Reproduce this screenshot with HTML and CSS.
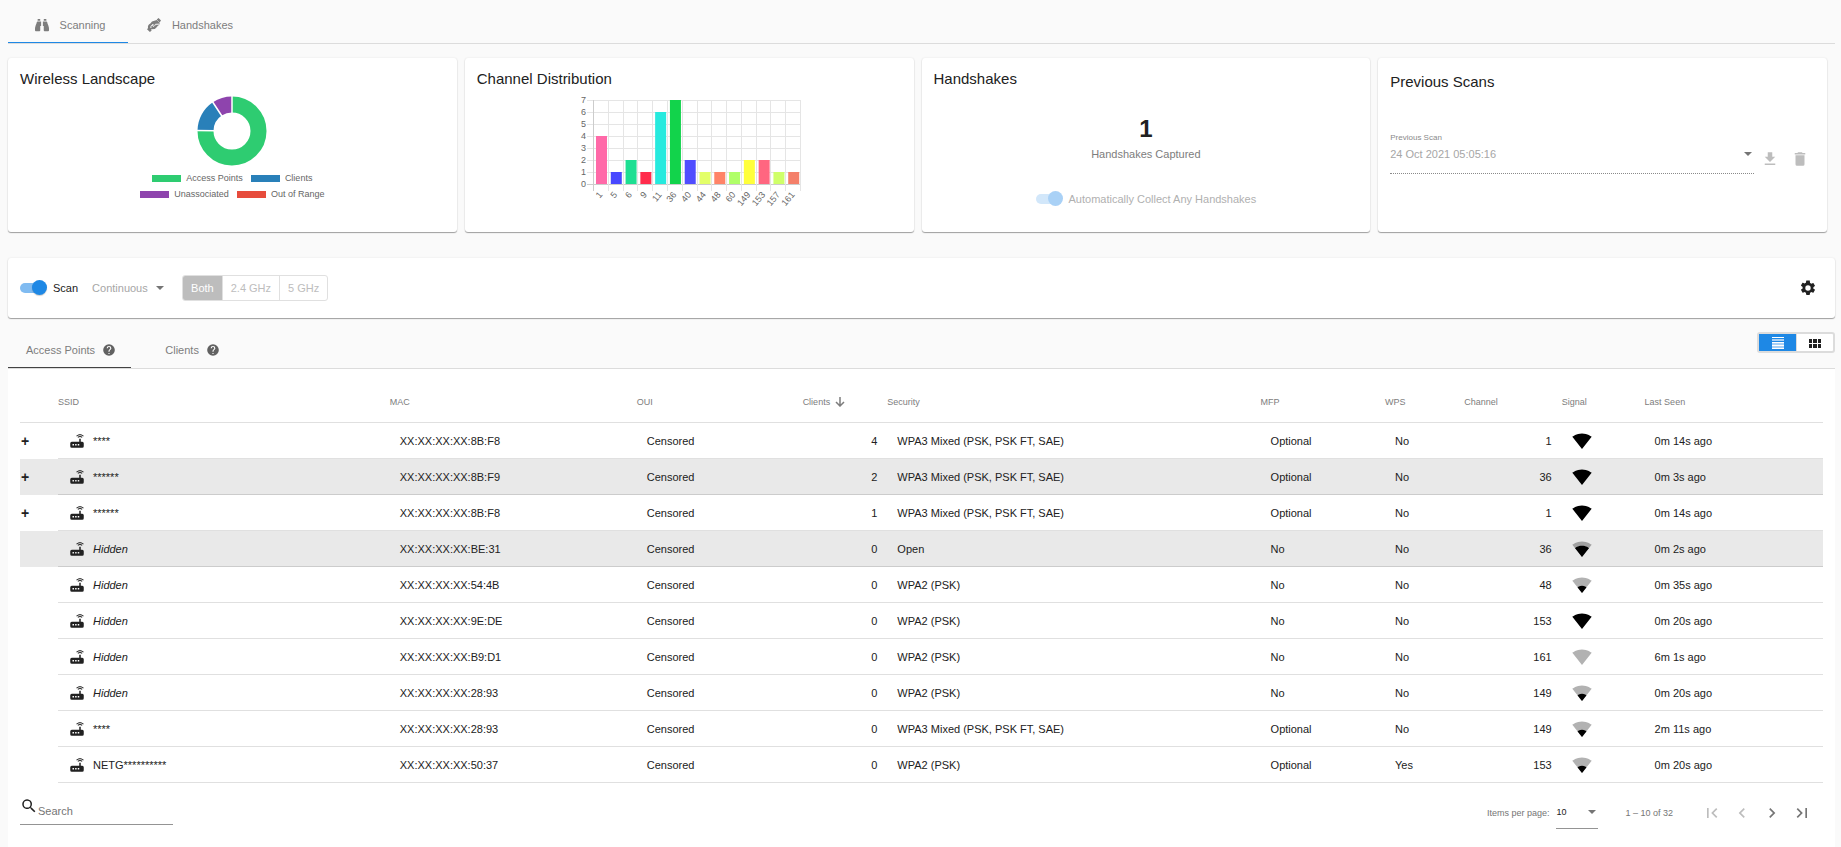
FILE: index.html
```html
<!DOCTYPE html>
<html lang="en">
<head>
    <meta charset="utf-8">
    <title>Recon</title>
    <link rel="stylesheet" href="styles.css">
</head>
<body>
    <svg class="sprite" aria-hidden="true">
        <symbol id="router" viewBox="0 0 24 24">
            <path d="M20.200 5.900l.8-.8C19.600 3.700 17.800 3 16 3s-3.600.7-5 2.100l.8.8C13 4.800 14.500 4.200 16 4.200s3 .6 4.200 1.700zM19.300 6.700C18.400 5.800 17.200 5.300 16 5.300s-2.400.5-3.300 1.400l.8.8c.7-.7 1.600-1 2.500-1s1.800.3 2.500 1zM19 13h-2V9h-2v4H5a2 2 0 0 0-2 2v4a2 2 0 0 0 2 2h14a2 2 0 0 0 2-2v-4a2 2 0 0 0-2-2zM8 18H6v-2h2zm3.500 0h-2v-2h2zm3.500 0h-2v-2h2z"/>
        </symbol>
        <symbol id="wifi-0" viewBox="0 0 24 24">
            <path fill-opacity=".3" d="M12 21.500 23.600 7C23.200 6.700 18.700 3 12 3S.8 6.700.4 7z"/>
        </symbol>
        <symbol id="wifi-1" viewBox="0 0 24 24">
            <path fill-opacity=".3" d="M12 21.500 23.600 7C23.200 6.700 18.700 3 12 3S.8 6.700.4 7z"/>
            <path d="M6.700 14.900 12 21.500l5.300-6.600C17.100 14.700 15.100 13 12 13s-5.100 1.700-5.300 1.900z"/>
        </symbol>
        <symbol id="wifi-3" viewBox="0 0 24 24">
            <path fill-opacity=".3" d="M12 21.500 23.600 7C23.200 6.700 18.700 3 12 3S.8 6.700.4 7z"/>
            <path d="M3.500 10.900 12 21.500l8.500-10.600C20.100 10.600 16.900 8 12 8s-8.100 2.600-8.500 2.900z"/>
        </symbol>
        <symbol id="wifi-4" viewBox="0 0 24 24">
            <path d="M12 21.500 23.600 7C23.200 6.700 18.700 3 12 3S.8 6.700.4 7z"/>
        </symbol>
        <symbol id="help" viewBox="0 0 24 24">
            <path d="M12 2a10 10 0 1 0 0 20 10 10 0 0 0 0-20zm1 17h-2v-2h2zm2.070-7.750-.9.920C13.450 12.900 13 13.500 13 15h-2v-.5c0-1.100.45-2.100 1.170-2.830l1.240-1.260c.37-.36.59-.86.59-1.410a2 2 0 1 0-4 0H8a4 4 0 1 1 8 0c0 .88-.36 1.680-.93 2.250z"/>
        </symbol>
    </svg>

    <nav class="tabs">
        <a class="tab active" href="#scanning">
            <svg class="tab-icon" viewBox="0 0 512 512"><path d="M416 48a16 16 0 0 0-16-16h-64a16 16 0 0 0-16 16v48h96zM64 159c-1 45-27 61-53 159-7 26-11 53-11 80v50a32 32 0 0 0 32 32h128a32 32 0 0 0 32-32V288h32V128H96c-17 0-31 14-32 31zm437 159c-26-98-52-114-53-159-1-17-15-31-32-31H288v160h32v160a32 32 0 0 0 32 32h128a32 32 0 0 0 32-32v-50c0-27-4-54-11-80zM176 32h-64a16 16 0 0 0-16 16v48h96V48a16 16 0 0 0-16-16z"/></svg>
            Scanning
        </a>
        <a class="tab" href="#handshakes">
            <svg class="tab-icon" viewBox="0 0 14 14">
                <path d="M0 11.300 1.600 9.500 4.700 12.400 2.900 14zM9.700 1.600 11.600 0 14 2.400 12.600 4.500z"/>
                <path d="M1 10C.6 8 1.500 6.300 3.400 5.600L5 3.500 9.800 1.900l3 3c0 1.500-.6 2.100-1.700 2.500L9.200 9.700 7.800 11l-3.300.2-1 1.300z"/>
                <path d="M3.900 10c-.2-2 .4-3 2.300-3.500L5.700 8c.8.9 2 .2 2.700-1.700l4.400-.2" fill="none" stroke="#fafafa"/>
            </svg>
            Handshakes
        </a>
    </nav>

    <section class="cards">
        <div class="card">
            <h2>Wireless Landscape</h2>
            <div class="landscape">
                <svg class="donut" viewBox="-36 -36 72 72">
                    <g fill="none" stroke-width="16">
                        <path stroke="#2ecc71" d="M0-26.500A26.500 26.500 0 1 1-26.500-.4"/>
                        <path stroke="#2980b9" d="M-26.500-.4A26.500 26.500 0 0 1-14.700-22.100"/>
                        <path stroke="#8e44ad" d="M-14.700-22.100A26.500 26.500 0 0 1 0-26.500"/>
                    </g>
                    <path stroke="#fff" stroke-width="1.500" d="M0-17V-36M-17-.3-36-.6M-9.500-14-20-30"/>
                </svg>
                <ul class="legend">
                    <li><i class="swatch green"></i>Access Points</li>
                    <li><i class="swatch blue"></i>Clients</li>
                </ul>
                <ul class="legend">
                    <li><i class="swatch purple"></i>Unassociated</li>
                    <li><i class="swatch red"></i>Out of Range</li>
                </ul>
            </div>
        </div>

        <div class="card">
            <h2>Channel Distribution</h2>
            <svg class="bars" id="channels" viewBox="0 0 228 120"></svg>
        </div>

        <div class="card">
            <h2>Handshakes</h2>
            <div class="captured">
                <strong>1</strong>
                <span>Handshakes Captured</span>
                <label class="switch-label disabled">
                    <input type="checkbox" class="switch" checked disabled>
                    Automatically Collect Any Handshakes
                </label>
            </div>
        </div>

        <div class="card previous">
            <h2>Previous Scans</h2>
            <div class="previous-row">
                <div class="field">
                    <label for="previous-scan">Previous Scan</label>
                    <select id="previous-scan" class="select" disabled>
                        <option>24 Oct 2021 05:05:16</option>
                    </select>
                </div>
                <button class="icon-btn" aria-label="Download" disabled>
                    <svg viewBox="0 0 24 24"><path d="M19 9h-4V3H9v6H5l7 7 7-7zM5 18v2h14v-2H5z"/></svg>
                </button>
                <button class="icon-btn" aria-label="Delete" disabled>
                    <svg viewBox="0 0 24 24"><path d="M6 19a2 2 0 0 0 2 2h8a2 2 0 0 0 2-2V7H6v12zM19 4h-3.500l-1-1h-5l-1 1H5v2h14V4z"/></svg>
                </button>
            </div>
        </div>
    </section>

    <section class="toolbar">
        <label class="switch-label">
            <input type="checkbox" class="switch" checked>
            Scan
        </label>
        <select class="select scan-mode" aria-label="Scan mode" disabled>
            <option>Continuous</option>
        </select>
        <div class="bands">
            <button class="selected" disabled>Both</button>
            <button disabled>2.4 GHz</button>
            <button disabled>5 GHz</button>
        </div>
        <button class="icon-btn settings" aria-label="Settings">
            <svg viewBox="0 0 24 24"><path d="M19.140 12.940c.04-.3.06-.61.06-.94s-.02-.64-.07-.94l2.030-1.580a.49.490 0 0 0 .12-.61l-1.920-3.320a.49.490 0 0 0-.59-.22l-2.390.96a7 7 0 0 0-1.620-.94l-.36-2.540A.48.480 0 0 0 13.920 2h-3.840a.48.480 0 0 0-.48.410l-.36 2.540a7.400 7.400 0 0 0-1.620.94l-2.390-.96a.48.480 0 0 0-.59.220L2.720 8.470a.48.480 0 0 0 .12.610l2.030 1.580c-.05.3-.07.62-.07.94s.02.64.07.94l-2.030 1.580a.49.490 0 0 0-.12.610l1.920 3.320c.12.220.37.290.59.220l2.390-.96c.5.380 1.030.7 1.620.94l.36 2.540c.05.24.24.410.48.410h3.840c.24 0 .44-.17.470-.410l.36-2.540a7 7 0 0 0 1.620-.94l2.390.96c.22.080.47 0 .59-.22l1.920-3.320a.48.480 0 0 0-.12-.61zM12 15.600a3.600 3.600 0 1 1 0-7.200 3.600 3.600 0 0 1 0 7.200z" fill-rule="evenodd"/></svg>
        </button>
    </section>

    <div class="list-head">
        <nav class="tabs list-tabs">
            <a class="tab active" href="#access-points">Access Points <svg class="help"><use href="#help"/></svg></a>
            <a class="tab" href="#clients">Clients <svg class="help"><use href="#help"/></svg></a>
        </nav>
        <div class="view-toggle">
            <button class="selected" aria-label="Table view">
                <svg viewBox="0 0 12 12"><path fill="#fff" d="M0 0h12v1H0zM0 5h12v1H0zM0 8h12v1H0zM0 11h12v1H0z"/><path fill="#a9d1f6" d="M0 2h12v2H0zM0 6h12v2H0zM0 9h12v2H0z"/></svg>
            </button>
            <button aria-label="Grid view">
                <svg viewBox="0 0 12 12"><path fill="#212121" d="M0 2h3v4H0zM4 2h4v4H4zM9 2h3v4H9zM0 7h3v4H0zM4 7h4v4H4zM9 7h3v4H9z"/></svg>
            </button>
        </div>
    </div>

    <main class="panel">
        <table>
            <colgroup>
                <col class="c-expand"><col class="c-ssid"><col class="c-mac"><col class="c-oui"><col class="c-clients"><col class="c-security">
                <col class="c-mfp"><col class="c-wps"><col class="c-channel"><col class="c-signal"><col class="c-seen">
            </colgroup>
            <thead>
                <tr>
                    <th></th>
                    <th>SSID</th>
                    <th>MAC</th>
                    <th>OUI</th>
                    <th>Clients <svg class="sort" viewBox="0 0 10 10"><path d="M5 0v8.500M1 5l4 4 4-4" fill="none" stroke="currentColor" stroke-width="1.500"/></svg></th>
                    <th>Security</th>
                    <th>MFP</th>
                    <th>WPS</th>
                    <th>Channel</th>
                    <th>Signal</th>
                    <th>Last Seen</th>
                </tr>
            </thead>
            <tbody>
                <tr>
                    <td><button class="expand">+</button></td>
                    <td><svg class="router"><use href="#router"/></svg>****</td>
                    <td>XX:XX:XX:XX:8B:F8</td>
                    <td>Censored</td>
                    <td class="num">4</td>
                    <td>WPA3 Mixed (PSK, PSK FT, SAE)</td>
                    <td>Optional</td>
                    <td>No</td>
                    <td class="num">1</td>
                    <td><svg class="wifi"><use href="#wifi-4"/></svg></td>
                    <td>0m 14s ago</td>
                </tr>
                <tr class="shaded">
                    <td><button class="expand">+</button></td>
                    <td><svg class="router"><use href="#router"/></svg>******</td>
                    <td>XX:XX:XX:XX:8B:F9</td>
                    <td>Censored</td>
                    <td class="num">2</td>
                    <td>WPA3 Mixed (PSK, PSK FT, SAE)</td>
                    <td>Optional</td>
                    <td>No</td>
                    <td class="num">36</td>
                    <td><svg class="wifi"><use href="#wifi-4"/></svg></td>
                    <td>0m 3s ago</td>
                </tr>
                <tr>
                    <td><button class="expand">+</button></td>
                    <td><svg class="router"><use href="#router"/></svg>******</td>
                    <td>XX:XX:XX:XX:8B:F8</td>
                    <td>Censored</td>
                    <td class="num">1</td>
                    <td>WPA3 Mixed (PSK, PSK FT, SAE)</td>
                    <td>Optional</td>
                    <td>No</td>
                    <td class="num">1</td>
                    <td><svg class="wifi"><use href="#wifi-4"/></svg></td>
                    <td>0m 14s ago</td>
                </tr>
                <tr class="shaded">
                    <td></td>
                    <td><svg class="router"><use href="#router"/></svg><em>Hidden</em></td>
                    <td>XX:XX:XX:XX:BE:31</td>
                    <td>Censored</td>
                    <td class="num">0</td>
                    <td>Open</td>
                    <td>No</td>
                    <td>No</td>
                    <td class="num">36</td>
                    <td><svg class="wifi"><use href="#wifi-3"/></svg></td>
                    <td>0m 2s ago</td>
                </tr>
                <tr>
                    <td></td>
                    <td><svg class="router"><use href="#router"/></svg><em>Hidden</em></td>
                    <td>XX:XX:XX:XX:54:4B</td>
                    <td>Censored</td>
                    <td class="num">0</td>
                    <td>WPA2 (PSK)</td>
                    <td>No</td>
                    <td>No</td>
                    <td class="num">48</td>
                    <td><svg class="wifi"><use href="#wifi-1"/></svg></td>
                    <td>0m 35s ago</td>
                </tr>
                <tr>
                    <td></td>
                    <td><svg class="router"><use href="#router"/></svg><em>Hidden</em></td>
                    <td>XX:XX:XX:XX:9E:DE</td>
                    <td>Censored</td>
                    <td class="num">0</td>
                    <td>WPA2 (PSK)</td>
                    <td>No</td>
                    <td>No</td>
                    <td class="num">153</td>
                    <td><svg class="wifi"><use href="#wifi-4"/></svg></td>
                    <td>0m 20s ago</td>
                </tr>
                <tr>
                    <td></td>
                    <td><svg class="router"><use href="#router"/></svg><em>Hidden</em></td>
                    <td>XX:XX:XX:XX:B9:D1</td>
                    <td>Censored</td>
                    <td class="num">0</td>
                    <td>WPA2 (PSK)</td>
                    <td>No</td>
                    <td>No</td>
                    <td class="num">161</td>
                    <td><svg class="wifi"><use href="#wifi-0"/></svg></td>
                    <td>6m 1s ago</td>
                </tr>
                <tr>
                    <td></td>
                    <td><svg class="router"><use href="#router"/></svg><em>Hidden</em></td>
                    <td>XX:XX:XX:XX:28:93</td>
                    <td>Censored</td>
                    <td class="num">0</td>
                    <td>WPA2 (PSK)</td>
                    <td>No</td>
                    <td>No</td>
                    <td class="num">149</td>
                    <td><svg class="wifi"><use href="#wifi-1"/></svg></td>
                    <td>0m 20s ago</td>
                </tr>
                <tr>
                    <td></td>
                    <td><svg class="router"><use href="#router"/></svg>****</td>
                    <td>XX:XX:XX:XX:28:93</td>
                    <td>Censored</td>
                    <td class="num">0</td>
                    <td>WPA3 Mixed (PSK, PSK FT, SAE)</td>
                    <td>Optional</td>
                    <td>No</td>
                    <td class="num">149</td>
                    <td><svg class="wifi"><use href="#wifi-1"/></svg></td>
                    <td>2m 11s ago</td>
                </tr>
                <tr>
                    <td></td>
                    <td><svg class="router"><use href="#router"/></svg>NETG**********</td>
                    <td>XX:XX:XX:XX:50:37</td>
                    <td>Censored</td>
                    <td class="num">0</td>
                    <td>WPA2 (PSK)</td>
                    <td>Optional</td>
                    <td>Yes</td>
                    <td class="num">153</td>
                    <td><svg class="wifi"><use href="#wifi-1"/></svg></td>
                    <td>0m 20s ago</td>
                </tr>
            </tbody>
        </table>

        <footer class="panel-foot">
            <label class="search">
                <svg viewBox="0 0 24 24"><path d="M15.500 14h-.79l-.28-.27A6.500 6.500 0 1 0 13.730 14.430l.27.28v.79l5 4.990L20.490 19zm-6 0a4.500 4.500 0 1 1 0-9 4.500 4.500 0 0 1 0 9z"/></svg>
                <input type="text" placeholder="Search" aria-label="Search">
            </label>
            <div class="paginator">
                <label for="page-size">Items per page:</label>
                <select id="page-size" class="select">
                    <option>10</option>
                </select>
                <span class="range">1 – 10 of 32</span>
                <button class="page-btn" aria-label="First page" disabled><svg viewBox="0 0 24 24"><path d="M18.410 16.590 13.820 12l4.590-4.590L17 6l-6 6 6 6zM6 6h2v12H6z"/></svg></button>
                <button class="page-btn" aria-label="Previous page" disabled><svg viewBox="0 0 24 24"><path d="M15.410 7.410 14 6l-6 6 6 6 1.410-1.410L10.830 12z"/></svg></button>
                <button class="page-btn" aria-label="Next page"><svg viewBox="0 0 24 24"><path d="M10 6 8.590 7.410 13.170 12l-4.580 4.590L10 18l6-6z"/></svg></button>
                <button class="page-btn" aria-label="Last page"><svg viewBox="0 0 24 24"><path d="M5.590 7.410 10.180 12l-4.590 4.590L7 18l6-6-6-6zM16 6h2v12h-2z"/></svg></button>
            </div>
        </footer>
    </main>
    <script src="chart.js"></script>
</body>
</html>
```
FILE: chart.js
```js
const channels = [
    ['1', 4, '#ff69a8'],
    ['5', 1, '#4848ff'],
    ['6', 2, '#1ddf92'],
    ['9', 1, '#ff2c4c'],
    ['11', 6, '#26eade'],
    ['36', 7, '#12d34b'],
    ['40', 2, '#504dff'],
    ['44', 1, '#e3ff69'],
    ['48', 1, '#ff8468'],
    ['60', 1, '#b0ff69'],
    ['149', 2, '#ffff3b'],
    ['153', 2, '#ff6680'],
    ['157', 1, '#cfff69'],
    ['161', 1, '#f47f69']
];

const chart = document.querySelector('#channels');
const left = 19, right = 226, top0 = 6, step = 12, max = 7;
const bottom = top0 + step * max;
const slot = (right - left) / channels.length;

const add = (name, attrs, text) => {
    const el = document.createElementNS('http://www.w3.org/2000/svg', name);
    Object.keys(attrs).forEach((key) => el.setAttribute(key, attrs[key]));
    if(text) el.textContent = text;
    chart.appendChild(el);
}

const line = (x1, y1, x2, y2, cls) => add('line', {x1, y1, x2, y2, 'class': cls});

for(let i = 0; i <= max; i++){
    let y = top0 + step * i;
    line(left - 7, y + .5, right, y + .5, i === max ? 'axis' : 'grid');
    add('text', {x: left - 8, y: y + 3, 'text-anchor': 'end'}, String(max - i));
}
for(let i = 0; i <= channels.length; i++){
    let x = Math.round(left + slot * i) - .5;
    line(x, top0, x, bottom + 7, i === 0 ? 'axis' : 'grid');
}
channels.forEach(([name, count, color], i) => {
    let x = left + slot * i;
    add('rect', {x: x + 2, y: bottom - step * count, width: 11, height: step * count, fill: color});
    add('text', {'text-anchor': 'end', transform: `translate(${x + 9} ${bottom + 11}) rotate(-50)`}, name);
});
```
FILE: styles.css
```css
*{
    box-sizing: border-box;
}
body{
    margin: 0;
    padding: 6px 6px 0 8px;
    min-height: 100vh;
    display: flex;
    flex-direction: column;
    background-color: #fafafa;
    color: #212121;
    font-family: "Liberation Sans", Arial, sans-serif;
    font-size: 11px;
}
button, input, select{
    font: inherit;
    color: inherit;
}
button{
    padding: 0;
    border: 0;
    background: none;
}
svg{
    fill: currentColor;
}
.sprite{
    display: none;
}

/* tabs */
.tabs{
    display: flex;
    height: 38px;
    border-bottom: 1px solid #dcdcdc;
}
.tab{
    display: flex;
    align-items: center;
    justify-content: center;
    min-width: 120px;
    padding: 2px 0 0 4px;
    border-bottom: 1px solid transparent;
    color: #7d7d7d;
    text-decoration: none;
}
.tab.active{
    border-color: #1e88e5;
}
.tab-icon{
    width: 14px;
    height: 14px;
    margin-right: 11px;
}

/* cards */
.cards{
    display: grid;
    grid-template-columns: repeat(4, 1fr);
    margin-top: 14px;
}
.card, .toolbar{
    background-color: #fff;
    border-radius: 3px;
    box-shadow: 0 1px 1px rgba(0, 0, 0, .35), 0 0 2px rgba(0, 0, 0, .1);
}
.card{
    min-height: 174px;
    margin-right: 8px;
    padding: 12px;
}
h2{
    margin: 0;
    font-size: 15px;
    font-weight: normal;
    line-height: 18px;
}
.landscape, .captured{
    display: flex;
    flex-direction: column;
    align-items: center;
}
.donut{
    width: 72px;
    height: 72px;
    margin: 7px 0 3px;
}
.legend{
    display: flex;
    gap: 8px;
    margin: 0;
    padding: 0;
    list-style: none;
    font-size: 9px;
    line-height: 16px;
    color: #666;
}
.legend li{
    display: flex;
    align-items: center;
    gap: 5px;
}
.swatch{
    width: 29px;
    height: 7px;
}
.green{ background-color: #2ecc71; }
.blue{ background-color: #2980b9; }
.purple{ background-color: #8e44ad; }
.red{ background-color: #e74c3c; }

.bars{
    display: block;
    width: 228px;
    height: 120px;
    margin: 6px auto 0;
    font-size: 9px;
}
.bars text{
    fill: #666;
}
.bars .grid{
    stroke: #e5e5e5;
}
.bars .axis{
    stroke: #ccc;
}

.captured{
    color: #7d7d7d;
    padding-top: 27px;
}
.captured strong{
    font-size: 24px;
    line-height: 28px;
    color: #212121;
}
.captured span{
    margin-top: 3px;
    line-height: 16px;
}
.captured .switch-label{
    margin-top: 29px;
}
.switch-label{
    display: flex;
    align-items: center;
    gap: 6px;
}
.switch-label.disabled{
    color: #b0b0b0;
}
.switch{
    appearance: none;
    position: relative;
    width: 27px;
    height: 16px;
    margin: 0;
}
.switch::before{
    content: "";
    position: absolute;
    top: 3px;
    left: 0;
    width: 26px;
    height: 10px;
    border-radius: 5px;
    background-color: #80bbf1;
}
.switch::after{
    content: "";
    position: absolute;
    top: 0;
    right: 0;
    width: 15px;
    height: 15px;
    border-radius: 50%;
    background-color: #1e88e5;
    box-shadow: 0 1px 1px rgba(0, 0, 0, .2);
}
.switch:disabled::before{
    background-color: #d2e7fa;
}
.switch:disabled::after{
    background-color: #a9d1f6;
    box-shadow: none;
}

.previous{
    padding-top: 15px;
}
.previous-row{
    display: flex;
    align-items: flex-end;
    margin-top: 42px;
}
.field{
    flex: 1;
    border-bottom: 1px dotted #8a8a8a;
    margin-right: 1px;
}
.field label{
    display: block;
    font-size: 8px;
    line-height: 10px;
    color: #8a8a8a;
}
.select{
    appearance: none;
    border: 0;
    border-radius: 0;
    padding: 0;
    background: no-repeat right 2px center url("data:image/svg+xml,%3Csvg xmlns='http://www.w3.org/2000/svg' width='8' height='4'%3E%3Cpath d='M0 0h8L4 4z' fill='%23757575'/%3E%3C/svg%3E");
}
.select:disabled{
    color: #a6a6a6;
    opacity: 1;
}
.field .select{
    display: block;
    width: 100%;
    height: 22px;
    margin-bottom: 8px;
}
.icon-btn{
    display: flex;
    align-items: center;
    justify-content: center;
    width: 30px;
    height: 30px;
}
.icon-btn svg{
    width: 18px;
    height: 18px;
}
.icon-btn:disabled{
    color: #bdbdbd;
}

/* scan controls */
.toolbar{
    display: flex;
    align-items: center;
    height: 60px;
    margin-top: 26px;
    padding: 0 12px;
}
.scan-mode{
    width: 74px;
    height: 20px;
    margin: 0 16px 0 14px;
}
.bands{
    display: flex;
    border: 1px solid #e0e0e0;
    border-radius: 3px;
    overflow: hidden;
}
.bands button{
    height: 24px;
    padding: 0 8px;
    color: #bdbdbd;
}
.bands button + button{
    border-left: 1px solid #e0e0e0;
}
.bands .selected{
    background-color: #bdbdbd;
    color: #fff;
}
.settings{
    margin-left: auto;
}

/* list */
.list-head{
    display: flex;
    justify-content: space-between;
    align-items: flex-start;
    margin-top: 14px;
    border-bottom: 1px solid #dcdcdc;
}
.list-tabs{
    height: 36px;
    border-bottom: 0;
}
.list-tabs .tab{
    padding: 0 15px 0 18px;
}
.list-tabs .active{
    border-color: #424242;
}
.help{
    width: 14px;
    height: 14px;
    margin-left: 7px;
    color: #616161;
}
.view-toggle{
    display: flex;
    border: 2px solid #dcdcdc;
    border-radius: 3px;
    background-color: #fff;
}
.view-toggle button{
    display: flex;
    align-items: center;
    justify-content: center;
    width: 37px;
    height: 17px;
}
.view-toggle button + button{
    border-left: 1px solid #dcdcdc;
}
.view-toggle svg{
    width: 12px;
    height: 12px;
}
.view-toggle .selected{
    background-color: #1e88e5;
}
.panel{
    flex: 1;
    padding: 12px 12px 0;
    background-color: #fff;
}
table{
    width: 100%;
    table-layout: fixed;
    border-collapse: separate;
    border-spacing: 0;
}
.c-expand{ width: 38px; }
.c-ssid{ width: 18.4%; }
.c-mac{ width: 13.7%; }
.c-oui{ width: 9.2%; }
.c-clients{ width: 4.7%; }
.c-security{ width: 20.7%; }
.c-mfp{ width: 6.9%; }
.c-wps{ width: 4.4%; }
.c-channel{ width: 5.4%; }
.c-signal{ width: 4.6%; }
th{
    height: 42px;
    padding: 0;
    border-bottom: 1px solid #e0e0e0;
    font-size: 9px;
    font-weight: normal;
    text-align: left;
    color: #7d7d7d;
}
td{
    height: 36px;
    padding: 0 10px;
    border-bottom: 1px solid #e0e0e0;
    white-space: nowrap;
}
td:first-child{
    padding: 0;
    border-bottom: 0;
}
.shaded td{
    background-color: #e9e9e9;
    border-color: #ccc;
}
.num{
    text-align: right;
}
.expand{
    width: 10px;
    font: bold 14px "Liberation Sans", Arial, sans-serif;
}
.sort{
    width: 10px;
    height: 10px;
    margin-left: 2px;
    vertical-align: -2px;
}
.router{
    width: 18px;
    height: 18px;
    margin-right: 7px;
    vertical-align: -5px;
}
.wifi{
    display: block;
    width: 20px;
    height: 20px;
    color: #000;
}

.panel-foot{
    display: flex;
    justify-content: space-between;
    align-items: flex-start;
    padding: 13px 6px 0 0;
}
.search{
    display: flex;
    align-items: center;
    width: 153px;
    height: 29px;
    border-bottom: 1px solid #949494;
}
.search svg{
    width: 18px;
    height: 18px;
    margin-bottom: 8px;
}
.search input{
    flex: 1;
    min-width: 0;
    border: 0;
    padding: 2px 0 0;
    background: none;
}
.search input::placeholder{
    color: #757575;
}
.paginator{
    display: flex;
    align-items: center;
    font-size: 9px;
    color: #757575;
}
.paginator .select{
    width: 42px;
    height: 33px;
    margin: 0 27px 0 7px;
    border-bottom: 1px solid #949494;
    color: #212121;
}
.range{
    margin-right: 24px;
}
.page-btn{
    width: 30px;
    height: 30px;
}
.page-btn svg{
    width: 20px;
    height: 20px;
    vertical-align: middle;
}
.page-btn:disabled{
    color: #bdbdbd;
}
```
